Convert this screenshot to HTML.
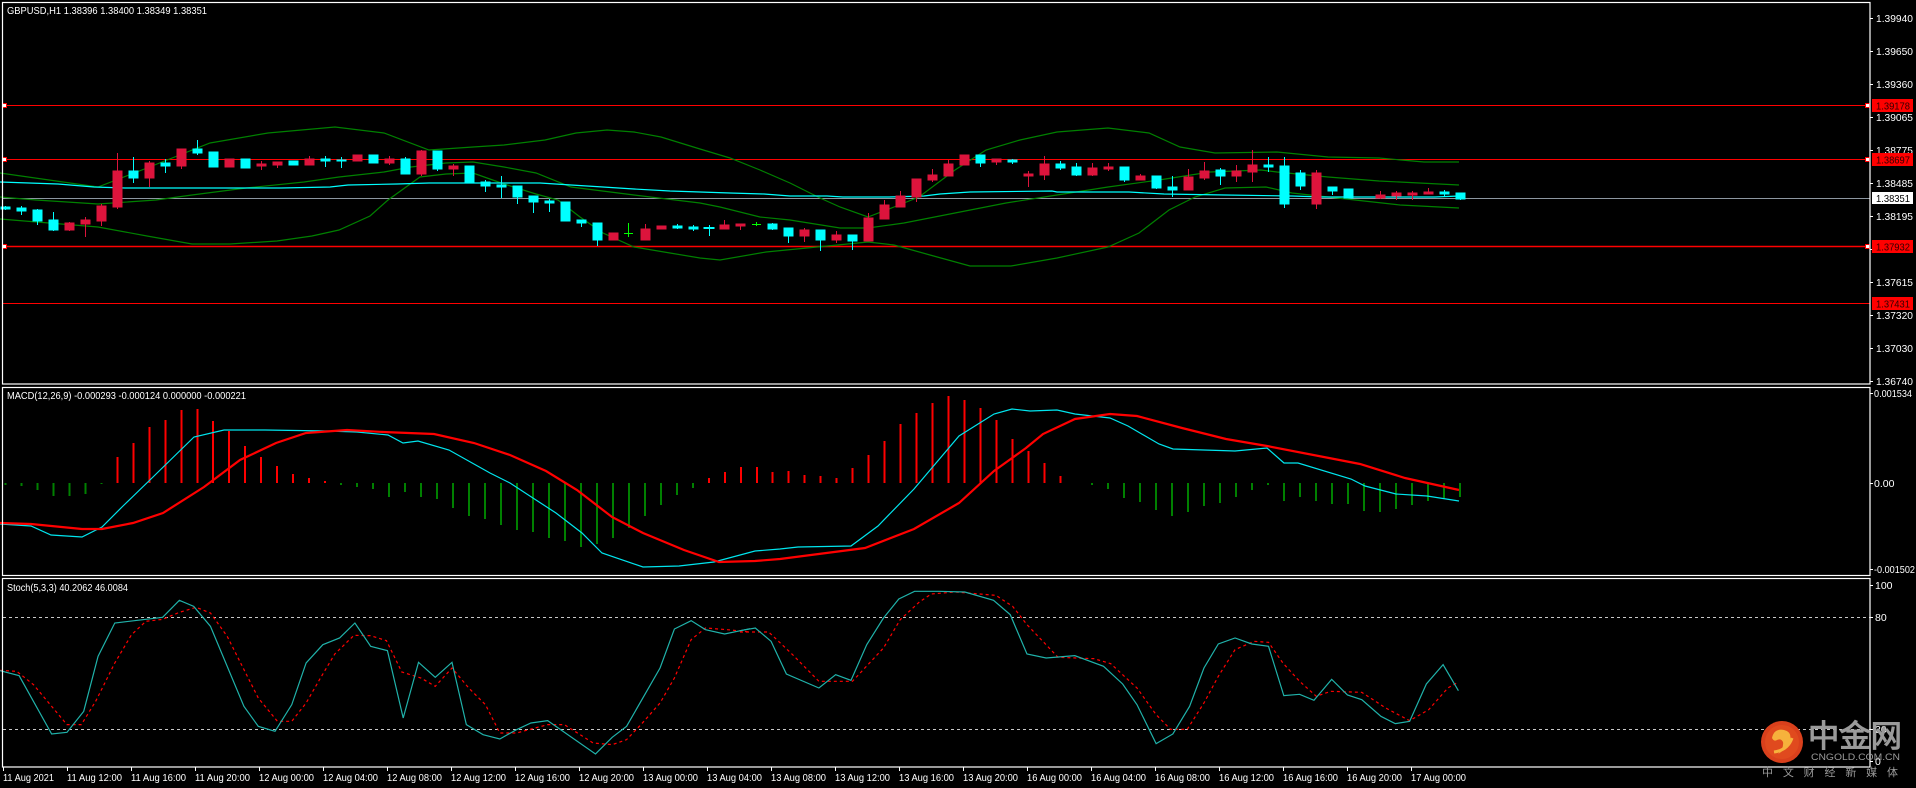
<!DOCTYPE html>
<html><head><meta charset="utf-8"><style>
html,body{margin:0;padding:0;background:#000;}
svg{display:block;}
text{font-family:"Liberation Sans",sans-serif;}
</style></head><body>
<svg width="1916" height="788" viewBox="0 0 1916 788" xmlns="http://www.w3.org/2000/svg">
<rect width="1916" height="788" fill="#000"/>

<!-- horizontal level lines -->
<g stroke="#ff0000" stroke-width="1">
<line x1="3" y1="105.5" x2="1870" y2="105.5"/>
<line x1="3" y1="159.5" x2="1870" y2="159.5"/>
<line x1="3" y1="246.5" x2="1870" y2="246.5" stroke-width="1.5"/>
<line x1="3" y1="303.5" x2="1870" y2="303.5"/>
</g>
<line x1="3" y1="198.5" x2="1870" y2="198.5" stroke="#8c96a0" stroke-width="1"/>

<!-- Bollinger bands -->
<g fill="none" stroke="#008000" stroke-width="1.2">
<polyline points="0,173 98,187 147,168 210,143 268,133 335,127 384,133 429,150 473,147 504,145 545,140 576,133 607,130 634,132 661,137 700,149 730,158 760,170 790,183 820,198 840,207 868,217 894,207 919,197 955,170 986,150 1020,140 1057,132 1108,128 1149,133 1180,147 1215,153 1277,152 1328,157 1379,158 1424,162 1459,162"/>
<polyline points="0,197 36,200 98,204 156,200 192,195 246,188 304,182 339,177 384,172 411,167 446,163 473,162 504,167 536,173 571,187 634,195 700,203 720,207 760,217 790,220 840,228 868,228 904,223 955,213 1006,203 1057,195 1108,187 1159,180 1210,172 1261,170 1277,172 1328,177 1379,181 1459,185"/>
<polyline points="0,219 98,227 147,236 192,244 230,244 277,241 312,236 339,230 370,216 388,200 420,177 446,174 473,173 504,184 536,194 558,200 580,217 603,233 634,247 670,253 700,258 720,260 766,252 817,247 868,242 894,245 930,255 970,266 1011,266 1057,258 1108,247 1139,233 1169,210 1195,197 1225,188 1266,187 1292,193 1328,197 1400,205 1459,208"/>
</g>
<polyline fill="none" stroke="#00ffff" stroke-width="1.2" points="0,182 58,184 94,187 125,188 281,188 330,187 348,185 397,184 429,183 540,183 571,185 603,187 634,189 670,191 700,192 730,193 764,194 790,196 827,196 843,197 889,197 924,196 940,194 970,192 1052,191 1057,192 1129,192 1164,194 1225,195 1292,196 1322,197 1435,197 1459,196"/>

<!-- candles: red=up (crimson), cyan=down -->
<g stroke-width="1">
<g stroke="#00ffff" fill="#00ffff">
<line x1="5.5" y1="206" x2="5.5" y2="210"/><rect x="1" y="207" width="9" height="2"/>
<line x1="21.5" y1="206" x2="21.5" y2="215"/><rect x="17" y="208" width="9" height="3"/>
<line x1="37.5" y1="209" x2="37.5" y2="225"/><rect x="33" y="210" width="9" height="11"/>
<line x1="53.5" y1="212" x2="53.5" y2="231"/><rect x="49" y="220" width="9" height="10"/>
<line x1="133.5" y1="157" x2="133.5" y2="183"/><rect x="129" y="171" width="9" height="7"/>
<line x1="165.5" y1="159" x2="165.5" y2="173"/><rect x="161" y="163" width="9" height="3"/>
<line x1="197.5" y1="140" x2="197.5" y2="155"/><rect x="193" y="149" width="9" height="4"/>
<rect x="209" y="152" width="9" height="15"/>
<rect x="241" y="159" width="9" height="9"/>
<rect x="289" y="161" width="9" height="4"/>
<line x1="325.5" y1="156" x2="325.5" y2="167"/><rect x="321" y="159" width="9" height="2"/>
<line x1="341.5" y1="157" x2="341.5" y2="168"/><rect x="337" y="160" width="9" height="1"/>
<rect x="369" y="155" width="9" height="8"/>
<line x1="405.5" y1="157" x2="405.5" y2="174"/><rect x="401" y="159" width="9" height="15"/>
<line x1="437.5" y1="151" x2="437.5" y2="171"/><rect x="433" y="151" width="9" height="18"/>
<rect x="465" y="166" width="9" height="17"/>
<line x1="485.5" y1="180" x2="485.5" y2="192"/><rect x="481" y="182" width="9" height="4"/>
<line x1="501.5" y1="176" x2="501.5" y2="198"/><rect x="497" y="185" width="9" height="2"/>
<line x1="517.5" y1="186" x2="517.5" y2="204"/><rect x="513" y="186" width="9" height="11"/>
<line x1="533.5" y1="196" x2="533.5" y2="213"/><rect x="529" y="196" width="9" height="6"/>
<line x1="549.5" y1="199" x2="549.5" y2="212"/><rect x="545" y="201" width="9" height="2"/>
<rect x="561" y="202" width="9" height="19"/>
<line x1="581.5" y1="220" x2="581.5" y2="227"/><rect x="577" y="220" width="9" height="3"/>
<line x1="597.5" y1="223" x2="597.5" y2="246"/><rect x="593" y="223" width="9" height="17"/>
<line x1="677.5" y1="224" x2="677.5" y2="229"/><rect x="673" y="226" width="9" height="2"/>
<line x1="693.5" y1="225" x2="693.5" y2="231"/><rect x="689" y="227" width="9" height="2"/>
<line x1="709.5" y1="225" x2="709.5" y2="236"/><rect x="704" y="227.5" width="10" height="1"/>
<line x1="772.5" y1="223" x2="772.5" y2="230"/><rect x="768" y="224" width="9" height="5"/>
<line x1="788.5" y1="228" x2="788.5" y2="243"/><rect x="784" y="228" width="9" height="8"/>
<line x1="820.5" y1="230" x2="820.5" y2="251"/><rect x="816" y="230" width="9" height="10"/>
<line x1="852.5" y1="235" x2="852.5" y2="250"/><rect x="848" y="235" width="9" height="6"/>
<line x1="980.5" y1="155" x2="980.5" y2="167"/><rect x="976" y="155" width="9" height="8"/>
<line x1="1012.5" y1="159" x2="1012.5" y2="164"/><rect x="1008" y="160" width="9" height="2"/>
<line x1="1060.5" y1="161" x2="1060.5" y2="170"/><rect x="1056" y="164" width="9" height="4"/>
<line x1="1076.5" y1="163" x2="1076.5" y2="176"/><rect x="1072" y="167" width="9" height="8"/>
<line x1="1124.5" y1="167" x2="1124.5" y2="182"/><rect x="1120" y="167" width="9" height="13"/>
<line x1="1156.5" y1="176" x2="1156.5" y2="189"/><rect x="1152" y="176" width="9" height="12"/>
<line x1="1172.5" y1="176" x2="1172.5" y2="197"/><rect x="1168" y="187" width="9" height="3"/>
<line x1="1220.5" y1="168" x2="1220.5" y2="185"/><rect x="1216" y="170" width="9" height="6"/>
<line x1="1268.5" y1="157" x2="1268.5" y2="172"/><rect x="1264" y="165" width="9" height="2"/>
<line x1="1284.5" y1="157" x2="1284.5" y2="208"/><rect x="1280" y="166" width="9" height="38"/>
<line x1="1300.5" y1="170" x2="1300.5" y2="190"/><rect x="1296" y="173" width="9" height="13"/>
<line x1="1316.5" y1="179" x2="1316.5" y2="190"/><rect x="1312" y="185" width="9" height="3"/>
<line x1="1332.5" y1="187" x2="1332.5" y2="195"/><rect x="1328" y="187" width="9" height="4"/>
<rect x="1344" y="189" width="9" height="9"/>
<line x1="1444.5" y1="190" x2="1444.5" y2="196"/><rect x="1440" y="192" width="9" height="2"/>
<line x1="1460.5" y1="193" x2="1460.5" y2="200"/><rect x="1456" y="193" width="9" height="6"/>
</g>
<g stroke="#dc143c" fill="#dc143c">
<line x1="69.5" y1="222" x2="69.5" y2="231"/><rect x="65" y="223" width="9" height="7"/>
<line x1="85.5" y1="217" x2="85.5" y2="237"/><rect x="81" y="220" width="9" height="4"/>
<line x1="101.5" y1="204" x2="101.5" y2="226"/><rect x="97" y="206" width="9" height="15"/>
<line x1="117.5" y1="153" x2="117.5" y2="209"/><rect x="113" y="171" width="9" height="36"/>
<line x1="149.5" y1="161" x2="149.5" y2="187"/><rect x="145" y="163" width="9" height="15"/>
<line x1="181.5" y1="149" x2="181.5" y2="169"/><rect x="177" y="149" width="9" height="17"/>
<rect x="225" y="159" width="9" height="8"/>
<line x1="261.5" y1="161" x2="261.5" y2="170"/><rect x="257" y="164" width="9" height="2"/>
<line x1="277.5" y1="162" x2="277.5" y2="168"/><rect x="273" y="162" width="9" height="3"/>
<line x1="309.5" y1="156" x2="309.5" y2="165"/><rect x="305" y="159" width="9" height="6"/>
<rect x="353" y="155" width="9" height="6"/>
<line x1="389.5" y1="156" x2="389.5" y2="165"/><rect x="385" y="159" width="9" height="4"/>
<line x1="421.5" y1="150" x2="421.5" y2="176"/><rect x="417" y="151" width="9" height="23"/>
<line x1="453.5" y1="164" x2="453.5" y2="176"/><rect x="449" y="166" width="9" height="3"/>
<rect x="609" y="233" width="9" height="7"/>
<line x1="645.5" y1="224" x2="645.5" y2="240"/><rect x="641" y="229" width="9" height="11"/>
<rect x="657" y="226" width="9" height="3"/>
<line x1="724.5" y1="220" x2="724.5" y2="229"/><rect x="720" y="225" width="9" height="4"/>
<line x1="740.5" y1="224" x2="740.5" y2="230"/><rect x="736" y="224" width="9" height="2"/>
<line x1="804.5" y1="228" x2="804.5" y2="242"/><rect x="800" y="230" width="9" height="6"/>
<line x1="836.5" y1="231" x2="836.5" y2="243"/><rect x="832" y="235" width="9" height="5"/>
<line x1="868.5" y1="213" x2="868.5" y2="241"/><rect x="864" y="218" width="9" height="23"/>
<line x1="884.5" y1="200" x2="884.5" y2="219"/><rect x="880" y="205" width="9" height="14"/>
<line x1="900.5" y1="191" x2="900.5" y2="207"/><rect x="896" y="196" width="9" height="11"/>
<line x1="916.5" y1="179" x2="916.5" y2="202"/><rect x="912" y="179" width="9" height="18"/>
<line x1="932.5" y1="169" x2="932.5" y2="182"/><rect x="928" y="175" width="9" height="5"/>
<line x1="948.5" y1="160" x2="948.5" y2="176"/><rect x="944" y="164" width="9" height="12"/>
<rect x="960" y="155" width="9" height="10"/>
<line x1="996.5" y1="159" x2="996.5" y2="165"/><rect x="992" y="159" width="9" height="3"/>
<line x1="1028.5" y1="171" x2="1028.5" y2="187"/><rect x="1024" y="174" width="9" height="2"/>
<line x1="1044.5" y1="156" x2="1044.5" y2="180"/><rect x="1040" y="164" width="9" height="11"/>
<line x1="1092.5" y1="163" x2="1092.5" y2="176"/><rect x="1088" y="168" width="9" height="7"/>
<line x1="1108.5" y1="163" x2="1108.5" y2="171"/><rect x="1104" y="167" width="9" height="2"/>
<line x1="1140.5" y1="174" x2="1140.5" y2="180"/><rect x="1136" y="176" width="9" height="4"/>
<line x1="1188.5" y1="169" x2="1188.5" y2="190"/><rect x="1184" y="177" width="9" height="13"/>
<line x1="1204.5" y1="162" x2="1204.5" y2="180"/><rect x="1200" y="171" width="9" height="7"/>
<line x1="1236.5" y1="165" x2="1236.5" y2="182"/><rect x="1232" y="171" width="9" height="5"/>
<line x1="1252.5" y1="150" x2="1252.5" y2="182"/><rect x="1248" y="165" width="9" height="7"/>
<line x1="1316.5" y1="170" x2="1316.5" y2="209"/><rect x="1312" y="173" width="9" height="31"/>
<line x1="1380.5" y1="191" x2="1380.5" y2="199"/><rect x="1376" y="195" width="9" height="3"/>
<line x1="1396.5" y1="191" x2="1396.5" y2="200"/><rect x="1392" y="193" width="9" height="3"/>
<line x1="1412.5" y1="191" x2="1412.5" y2="200"/><rect x="1408" y="193" width="9" height="2"/>
<line x1="1428.5" y1="188" x2="1428.5" y2="194"/><rect x="1424" y="192" width="9" height="2"/>
</g>
<g stroke="#00ff00">
<line x1="628.5" y1="223" x2="628.5" y2="237"/><line x1="624" y1="233.5" x2="633" y2="233.5"/>
<line x1="756.5" y1="222" x2="756.5" y2="226"/><line x1="752" y1="224.5" x2="761" y2="224.5"/>
</g>
</g>

<!-- line handles -->
<g fill="#fff" stroke="#ff0000" stroke-width="1">
<rect x="2.5" y="103.5" width="4" height="4"/><rect x="2.5" y="157.5" width="4" height="4"/><rect x="2.5" y="244.5" width="4" height="4"/>
<rect x="1865.5" y="103.5" width="4" height="4"/><rect x="1865.5" y="157.5" width="4" height="4"/><rect x="1865.5" y="244.5" width="4" height="4"/>
</g>

<!-- MACD histogram -->
<g stroke-width="2">
<g stroke="#008000">
<path d="M5.5 483V485M21.5 483V486M37.5 483V490M53.5 483V496M69.5 483V496M85.5 483V494M101.5 483V484M341 483V485M357 483V487M373 483V489M389 483V497M405 483V492M421 483V497M437 483V499M453 483V508M469 483V516M485 483V519M501 483V525M517 483V530M533 483V532M549 483V538M565 483V541M581 483V547M597 483V544M613 483V538M629 483V528M645 483V516M661 483V505M677 483V495M693 483V488M1092 483V485M1108 483V489M1124 483V498M1140 483V502M1156 483V510M1172 483V516M1188 483V512M1204 483V506M1220 483V503M1236 483V497M1252 483V490M1268 483V485M1284 483V501M1300 483V497M1316 483V501M1332 483V504M1348 483V504M1364 483V511M1380 483V512M1396 483V509M1412 483V505M1428 483V501M1444 483V498M1460 483V497"/>
</g>
<g stroke="#ff0000">
<path d="M117.5 483V457M133.5 483V443M149.5 483V427M165.5 483V420M181.5 483V410M197.5 483V409M213 483V421M229 483V431M245 483V446M261 483V457M277 483V466M293 483V474M309 483V478M325 483V481M709 483V478M725 483V472M741 483V467M757 483V467M772.5 483V472M788.5 483V471M804.5 483V475M820.5 483V476M836.5 483V478M852.5 483V468M868.5 483V455M884.5 483V441M900.5 483V424M916.5 483V413M932.5 483V403M948.5 483V396M964.5 483V400M980.5 483V408M996.5 483V420M1012.5 483V439M1028.5 483V451M1044.5 483V463M1060.5 483V476"/>
</g>
</g>
<!-- MACD lines -->
<g fill="none">
<polyline stroke="#00e5ee" stroke-width="1.2" points="0,524 31,526 51,535 82,537 102,527 122,507 153,477 194,437 224,430 265,430 327,431 357,432 388,435 403,443 418,441 449,450 490,473 510,483 536,500 556,513 582,533 602,553 643,567 679,566 714,562 755,551 780,549 798,547 851,546 878,526 914,489 959,436 994,414 1012,409 1030,411 1057,410 1075,414 1110,418 1128,426 1159,444 1173,449 1235,451 1267,448 1284,463 1298,463 1351,479 1365,486 1396,494 1427,496 1459,501"/>
<polyline stroke="#ff0000" stroke-width="2.2" points="0,523 31,524 82,529 102,529 133,523 163,513 204,487 240,460 276,443 306,433 347,430 383,432 434,434 474,443 510,455 546,471 577,490 612,517 643,533 684,550 719,562 755,561 780,559 865,548 914,529 959,503 994,471 1026,448 1043,434 1075,419 1110,414 1137,416 1182,428 1226,439 1267,446 1329,458 1360,464 1405,478 1459,490"/>
</g>

<!-- Stoch levels -->
<g stroke="#c8c8c8" stroke-width="1" stroke-dasharray="3,3">
<line x1="3" y1="617.5" x2="1870" y2="617.5"/>
<line x1="3" y1="729.5" x2="1870" y2="729.5"/>
</g>
<g fill="none">
<g transform="translate(0,578) scale(0.4783,0.3333)">
<polyline vector-effect="non-scaling-stroke" stroke="#ff0000" stroke-width="1.2" stroke-dasharray="3,3" points="0,277 35,280 70,320 140,440 170,440 200,370 240,255 275,170 305,130 340,124 375,103 410,88 440,105 475,175 540,360 580,430 610,430 640,375 670,300 700,228 740,172 775,173 808,188 840,282 880,300 910,325 945,270 980,330 1015,380 1045,465 1080,465 1145,440 1180,440 1240,495 1280,500 1310,485 1340,440 1380,375 1410,300 1445,185 1475,150 1520,155 1568,162"/>
<polyline vector-effect="non-scaling-stroke" stroke="#20b2aa" stroke-width="1.2" points="0,278 40,293 108,468 140,463 175,400 205,235 240,135 340,118 375,67 405,85 440,145 510,385 540,445 575,460 610,380 640,255 675,200 710,180 742,135 775,205 810,218 843,420 875,253 910,298 945,253 975,440 1010,470 1045,483 1080,455 1110,435 1145,428 1245,528 1280,478 1310,445 1380,270 1410,153 1445,128 1475,155 1515,168 1568,152"/>
</g>
<g transform="translate(740,578) scale(0.4783,0.3333)">
<polyline vector-effect="non-scaling-stroke" stroke="#ff0000" stroke-width="1.2" stroke-dasharray="3,3" points="0,162 60,162 110,230 165,310 235,310 300,210 335,125 375,72 400,48 450,42 535,52 570,85 600,140 665,238 740,242 775,257 830,330 870,410 900,454 935,454 970,375 1000,295 1035,215 1075,190 1105,193 1135,255 1170,310 1205,355 1235,340 1300,343 1350,390 1400,428 1440,395 1480,330 1502,312"/>
<polyline vector-effect="non-scaling-stroke" stroke="#20b2aa" stroke-width="1.2" points="0,158 32,150 65,190 97,288 165,330 200,290 232,307 265,200 300,120 332,63 365,40 415,40 470,42 530,67 565,110 600,228 640,240 700,233 760,265 800,318 830,380 870,497 905,468 940,385 970,270 1000,198 1035,180 1070,198 1105,205 1137,353 1170,349 1200,367 1237,304 1270,351 1300,365 1340,415 1370,437 1400,430 1435,318 1470,260 1502,338"/>
</g>
</g>

<!-- frames -->
<g stroke="#ffffff" stroke-width="1.2" fill="none">
<rect x="2.5" y="2.5" width="1867.5" height="381.5"/>
<rect x="2.5" y="387.5" width="1867.5" height="188"/>
<rect x="2.5" y="578.5" width="1867.5" height="188.5"/>
</g>
<!-- axis ticks -->
<g stroke="#fff" stroke-width="1">
<path d="M1870 18.5h3M1870 51.5h3M1870 84.5h3M1870 117.5h3M1870 150.5h3M1870 183.5h3M1870 216.5h3M1870 249.5h3M1870 282.5h3M1870 315.5h3M1870 348.5h3M1870 381.5h3M1870 393.5h3M1870 483.5h3M1870 569.5h3M1870 585.5h3M1870 617.5h3M1870 729.5h3M1870 761.5h3"/>
<path d="M3.5 767v4M67.5 767v4M131.5 767v4M195.5 767v4M259.5 767v4M323.5 767v4M387.5 767v4M451.5 767v4M515.5 767v4M579.5 767v4M643.5 767v4M707.5 767v4M771.5 767v4M835.5 767v4M899.5 767v4M963.5 767v4M1027.5 767v4M1091.5 767v4M1155.5 767v4M1219.5 767v4M1283.5 767v4M1347.5 767v4M1411.5 767v4"/>
</g>

<!-- price axis -->
<g fill="#ffffff" font-size="10.5">
<text x="1876" y="22" textLength="37" lengthAdjust="spacingAndGlyphs">1.39940</text>
<text x="1876" y="55" textLength="37" lengthAdjust="spacingAndGlyphs">1.39650</text>
<text x="1876" y="88" textLength="37" lengthAdjust="spacingAndGlyphs">1.39360</text>
<text x="1876" y="121" textLength="37" lengthAdjust="spacingAndGlyphs">1.39065</text>
<text x="1876" y="154" textLength="37" lengthAdjust="spacingAndGlyphs">1.38775</text>
<text x="1876" y="187" textLength="37" lengthAdjust="spacingAndGlyphs">1.38485</text>
<text x="1876" y="220" textLength="37" lengthAdjust="spacingAndGlyphs">1.38195</text>
<text x="1876" y="253" textLength="37" lengthAdjust="spacingAndGlyphs">1.37905</text>
<text x="1876" y="286" textLength="37" lengthAdjust="spacingAndGlyphs">1.37615</text>
<text x="1876" y="319" textLength="37" lengthAdjust="spacingAndGlyphs">1.37320</text>
<text x="1876" y="352" textLength="37" lengthAdjust="spacingAndGlyphs">1.37030</text>
<text x="1876" y="385" textLength="37" lengthAdjust="spacingAndGlyphs">1.36740</text>
<text x="1874" y="397" textLength="38" lengthAdjust="spacingAndGlyphs">0.001534</text>
<text x="1874" y="487">0.00</text>
<text x="1874" y="573" textLength="41" lengthAdjust="spacingAndGlyphs">-0.001502</text>
<text x="1875" y="589">100</text>
<text x="1875" y="621">80</text>
<text x="1875" y="733">20</text>
<text x="1875" y="765">0</text>
</g>
<!-- price labels -->
<g font-size="10.5">
<rect x="1872" y="99" width="41" height="13" fill="#ff0000"/><text x="1876" y="109.5" fill="#300000" textLength="34" lengthAdjust="spacingAndGlyphs">1.39178</text>
<rect x="1872" y="153" width="41" height="13" fill="#ff0000"/><text x="1876" y="163.5" fill="#300000" textLength="34" lengthAdjust="spacingAndGlyphs">1.38697</text>
<rect x="1872" y="192" width="41" height="12" fill="#ffffff"/><text x="1876" y="202" fill="#000" textLength="34" lengthAdjust="spacingAndGlyphs">1.38351</text>
<rect x="1872" y="240" width="41" height="13" fill="#ff0000"/><text x="1876" y="250.5" fill="#300000" textLength="34" lengthAdjust="spacingAndGlyphs">1.37932</text>
<rect x="1872" y="297" width="41" height="13" fill="#ff0000"/><text x="1876" y="307.5" fill="#300000" textLength="34" lengthAdjust="spacingAndGlyphs">1.37431</text>
</g>

<!-- indicator titles -->
<g fill="#ffffff" font-size="10.5">
<text x="7" y="14" textLength="200" lengthAdjust="spacingAndGlyphs">GBPUSD,H1  1.38396 1.38400 1.38349 1.38351</text>
<text x="7" y="399" textLength="239" lengthAdjust="spacingAndGlyphs">MACD(12,26,9) -0.000293 -0.000124 0.000000 -0.000221</text>
<text x="7" y="591" textLength="121" lengthAdjust="spacingAndGlyphs">Stoch(5,3,3) 40.2062 46.0084</text>
</g>

<!-- time axis -->
<g fill="#ffffff" font-size="10.5">
<text x="3" y="781" textLength="51" lengthAdjust="spacingAndGlyphs">11 Aug 2021</text>
<text x="67" y="781" textLength="55" lengthAdjust="spacingAndGlyphs">11 Aug 12:00</text>
<text x="131" y="781" textLength="55" lengthAdjust="spacingAndGlyphs">11 Aug 16:00</text>
<text x="195" y="781" textLength="55" lengthAdjust="spacingAndGlyphs">11 Aug 20:00</text>
<text x="259" y="781" textLength="55" lengthAdjust="spacingAndGlyphs">12 Aug 00:00</text>
<text x="323" y="781" textLength="55" lengthAdjust="spacingAndGlyphs">12 Aug 04:00</text>
<text x="387" y="781" textLength="55" lengthAdjust="spacingAndGlyphs">12 Aug 08:00</text>
<text x="451" y="781" textLength="55" lengthAdjust="spacingAndGlyphs">12 Aug 12:00</text>
<text x="515" y="781" textLength="55" lengthAdjust="spacingAndGlyphs">12 Aug 16:00</text>
<text x="579" y="781" textLength="55" lengthAdjust="spacingAndGlyphs">12 Aug 20:00</text>
<text x="643" y="781" textLength="55" lengthAdjust="spacingAndGlyphs">13 Aug 00:00</text>
<text x="707" y="781" textLength="55" lengthAdjust="spacingAndGlyphs">13 Aug 04:00</text>
<text x="771" y="781" textLength="55" lengthAdjust="spacingAndGlyphs">13 Aug 08:00</text>
<text x="835" y="781" textLength="55" lengthAdjust="spacingAndGlyphs">13 Aug 12:00</text>
<text x="899" y="781" textLength="55" lengthAdjust="spacingAndGlyphs">13 Aug 16:00</text>
<text x="963" y="781" textLength="55" lengthAdjust="spacingAndGlyphs">13 Aug 20:00</text>
<text x="1027" y="781" textLength="55" lengthAdjust="spacingAndGlyphs">16 Aug 00:00</text>
<text x="1091" y="781" textLength="55" lengthAdjust="spacingAndGlyphs">16 Aug 04:00</text>
<text x="1155" y="781" textLength="55" lengthAdjust="spacingAndGlyphs">16 Aug 08:00</text>
<text x="1219" y="781" textLength="55" lengthAdjust="spacingAndGlyphs">16 Aug 12:00</text>
<text x="1283" y="781" textLength="55" lengthAdjust="spacingAndGlyphs">16 Aug 16:00</text>
<text x="1347" y="781" textLength="55" lengthAdjust="spacingAndGlyphs">16 Aug 20:00</text>
<text x="1411" y="781" textLength="55" lengthAdjust="spacingAndGlyphs">17 Aug 00:00</text>
</g>

<!-- watermark logo -->
<circle cx="1782" cy="742" r="21" fill="#d9401c"/>
<circle cx="1782" cy="742" r="17" fill="#e04a1e"/>
<path d="M1772 738 q2 -10 12 -8 q8 2 6 10 q-2 8 -12 14 q6 -6 5 -12 q-2 -4 -6 -2 q-3 2 -5 -2z" fill="#f6b23c"/>
<path d="M1774 752 q14 -2 18 -14" stroke="#f6b23c" stroke-width="3" fill="none"/>
<text x="1808" y="747" font-family="'Noto Sans CJK SC','WenQuanYi Zen Hei',sans-serif" font-size="31" font-weight="bold" fill="#9a9a9a" textLength="94" lengthAdjust="spacingAndGlyphs">中金网</text>
<text x="1811" y="760" font-size="9" fill="#9a9a9a" textLength="89" lengthAdjust="spacingAndGlyphs">CNGOLD.COM.CN</text>
<text x="1762" y="776" font-family="'Noto Sans CJK SC','WenQuanYi Zen Hei',sans-serif" font-size="11" fill="#9a9a9a" textLength="136" lengthAdjust="spacing">中文财经新媒体</text>
</svg>
</body></html>
